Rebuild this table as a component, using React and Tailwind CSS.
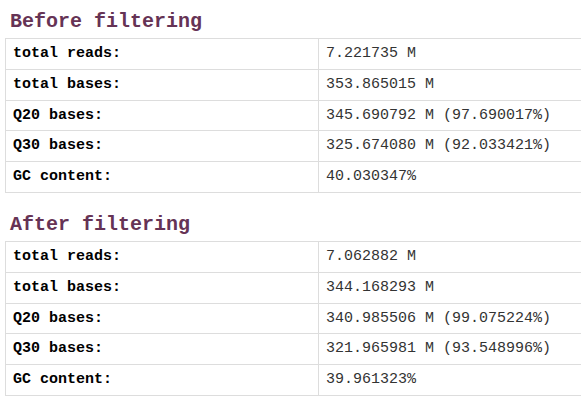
const BEFORE = [
    ["total reads:", "7.221735 M"],
    ["total bases:", "353.865015 M"],
    ["Q20 bases:", "345.690792 M (97.690017%)"],
    ["Q30 bases:", "325.674080 M (92.033421%)"],
    ["GC content:", "40.030347%"],
];

const AFTER = [
    ["total reads:", "7.062882 M"],
    ["total bases:", "344.168293 M"],
    ["Q20 bases:", "340.985506 M (99.075224%)"],
    ["Q30 bases:", "321.965981 M (93.548996%)"],
    ["GC content:", "39.961323%"],
];

function Section({ title, rows, className = "" }) {
    return (
        <div className={className}>
            <div className="pl-[10px] pt-[10px] pb-[5px] text-[20px] leading-[23px] font-bold text-[#663355]">
                {title}
            </div>
            <table className="ml-[5px] w-[800px] border-collapse table-fixed">
                <tbody>
                    {rows.map(([label, value]) => (
                        <tr key={label}>
                            <td className="w-[313px] border border-[#dddddd] px-[7px] py-[6px] text-[15px] leading-[17.8px] font-bold text-black">
                                {label}
                            </td>
                            <td className="border border-[#dddddd] px-[7px] py-[6px] text-[15px] leading-[17.8px] text-[#333333]">
                                {value}
                            </td>
                        </tr>
                    ))}
                </tbody>
            </table>
        </div>
    );
}

export default function App() {
    return (
        <div className="w-[581px] h-[397px] overflow-hidden bg-white font-['Liberation_Mono','Courier_New',monospace]">
            <Section title="Before filtering" rows={BEFORE} />
            <Section title="After filtering" rows={AFTER} className="mt-[10px]" />
        </div>
    );
}
